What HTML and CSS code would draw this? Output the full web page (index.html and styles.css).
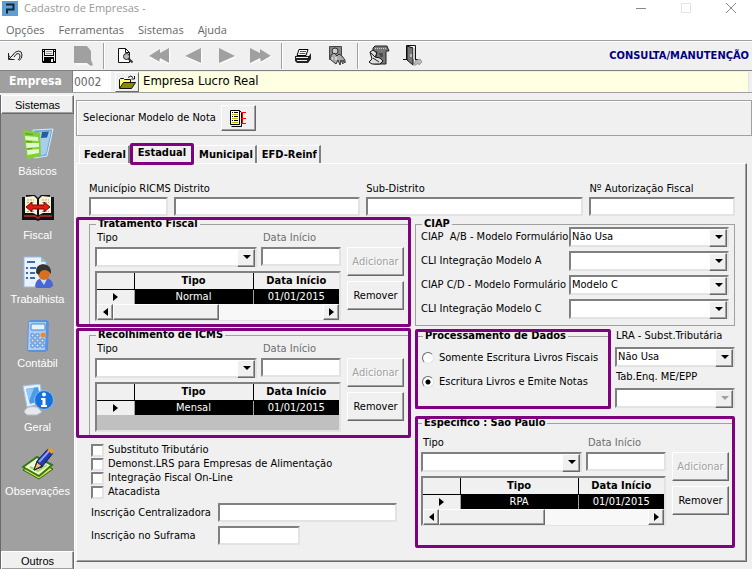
FILE: index.html
```html
<!DOCTYPE html>
<html lang="pt-BR">

<head>
    <meta charset="UTF-8">
    <meta name="viewport" content="width=device-width, initial-scale=1.0">
    <title>Cadastro de Empresas</title>
    <link rel="stylesheet" href="styles.css">
</head>

<body>
    <header class="titlebar">
        <svg class="logo" viewBox="0 0 16 15">
            <rect width="16" height="15" fill="#5f9fd0" />
            <path d="M4 3.500h7.500v5H4M5 8.500v4" fill="none" stroke="#12263c" stroke-width="2" />
        </svg>
        <h1>Cadastro de Empresas -</h1>
        <div class="window-buttons">
            <button type="button" aria-label="Minimizar"><svg viewBox="0 0 10 10"><path d="M0 5.500h10" stroke="#888" /></svg></button>
            <button type="button" aria-label="Maximizar"><svg viewBox="0 0 10 10"><path d="M.5.5h9v9h-9z" fill="none" stroke="#e4e4e4" /></svg></button>
            <button type="button" aria-label="Fechar"><svg viewBox="0 0 10 10"><path d="M0 0l10 10M10 0L0 10" stroke="#888" /></svg></button>
        </div>
    </header>
    <nav class="menubar">
        <a href="#">Opções</a>
        <a href="#">Ferramentas</a>
        <a href="#">Sistemas</a>
        <a href="#">Ajuda</a>
    </nav>

    <div class="toolbar">
        <div class="tools">
            <button type="button" aria-label="Desfazer">
                <svg width="16" height="12" viewBox="0 0 16 12"><path d="M1.500 3v6.500h6M2 9l5-5" fill="none" stroke="#222" /><path d="M4 8.500l-2-3M5 6q3-5 6.500-5T15 5t-3 5.500M7 7q2-3.500 4-3.500t2 2.500-2 4" fill="none" stroke="#222" /></svg>
            </button>
            <button type="button" aria-label="Salvar">
                <svg width="14" height="14" viewBox="0 0 14 14"><path d="M0 0h14v14H1l-1-1z" fill="#000" /><path d="M3 1h8v5H3zM1 1h1v1H1zM12 1h1v1h-1zM1 3h1v9H1zM12 3h1v9h-1zM2 7h10v1H2zM9 10h2v3H9z" fill="#f0f0f0" /><path d="M4 2.500h6M4 4.500h6" stroke="#999" /></svg>
            </button>
            <button type="button" aria-label="Excluir">
                <svg width="20" height="20" viewBox="0 0 20 20"><path d="M1 0h13l4 5v9l2 5-3 1-3-3H1z" fill="#a0a0a0" /><path d="M2 18h12l3 2" fill="none" stroke="#fff" /></svg>
            </button>
            <span class="separator"></span>
            <button type="button" aria-label="Pesquisar">
                <svg width="17" height="17" viewBox="0 0 17 17"><path d="M1.500 1.500h7l4 4v10h-11z" fill="#fff" stroke="#111" /><path d="M8.500 1.500v4h4" fill="none" stroke="#111" /><circle cx="9.500" cy="9.500" r="3" fill="#bbb" stroke="#222" /><path d="M11.500 11.500l4 4" stroke="#333" stroke-width="2" /></svg>
            </button>
            <button type="button" aria-label="Primeiro">
                <svg width="22" height="16" viewBox="0 0 22 16"><path d="M1 8L12 1v4l9-5v15l-9-5v4z" fill="#a0a0a0" /><path d="M2 9l10 6v-4l9.500 5V1" fill="none" stroke="#fff" /></svg>
            </button>
            <button type="button" aria-label="Anterior">
                <svg width="17" height="16" viewBox="0 0 17 16"><path d="M0 8L16 0v15z" fill="#a0a0a0" /><path d="M1 9l15.500 7V1" fill="none" stroke="#fff" /></svg>
            </button>
            <button type="button" aria-label="Próximo">
                <svg width="17" height="16" viewBox="0 0 17 16"><path d="M16 8L0 0v15z" fill="#a0a0a0" /><path d="M.5 16L17 8.500" stroke="#fff" /></svg>
            </button>
            <button type="button" aria-label="Último">
                <svg width="22" height="16" viewBox="0 0 22 16"><path d="M21 8L10 1v4L0 0v15l10-5v4z" fill="#a0a0a0" /><path d="M.5 16L10 11v4l11.500-7" fill="none" stroke="#fff" /></svg>
            </button>
            <span class="separator"></span>
            <button type="button" aria-label="Imprimir">
                <svg width="18" height="16" viewBox="0 0 18 16"><path d="M5 1.500h9l-2 6H3z" fill="#fff" stroke="#000" /><path d="M6 3.500h6M5.500 5.500h6" stroke="#555" /><path d="M1 8h14l2-3v6l-3 4H3l-2-2z" fill="#222" /><path d="M2 9.500h12M3 12.500h10" stroke="#eee" /></svg>
            </button>
            <button type="button" aria-label="Certificado">
                <svg width="18" height="19" viewBox="0 0 18 19"><path d="M1.500.5h12v13h-12z" fill="#888" stroke="#444" /><circle cx="7" cy="5" r="3" fill="#ccc" stroke="#333" /><path d="M3 14V9l3-2 3 3 2-2 3 2 3 4v3l-2-3v4l-2-4-1 5-2-5-2 4z" fill="#aaa" stroke="#333" /><path d="M4 11v3M8 11v3" stroke="#fff" /></svg>
            </button>
            <span class="separator"></span>
            <button type="button" aria-label="Telefones">
                <svg width="22" height="21" viewBox="0 0 22 21"><path d="M5 3l2-2h12l2 5h-3v13H6l3-12H5z" fill="#777" stroke="#222" /><path d="M7 3.500h12" stroke="#ccc" stroke-dasharray="1 1" /><path d="M2 7l3-2 4 3-2 4 5 1 3 3-3 3H4l-3-2 3-3z" fill="#ddd" stroke="#111" /><path d="M5 13l6 4M3 8l4 4M11 9h4M12 11h3" stroke="#222" /></svg>
            </button>
            <button type="button" aria-label="Sair">
                <svg width="20" height="21" viewBox="0 0 20 21"><path d="M3.500 14V.5h9V14M0 14.500h4M12 14.500h3" fill="none" stroke="#111" /><path d="M4 1l6 2v17l-6-5z" fill="#777" stroke="#111" /><path d="M10 3h2v11h-2z" fill="#ccc" /><path d="M8 9v3" stroke="#fff" /><path d="M10 20q3-2 2-4l5-2 2 3-3 3-1-2q-2 3-5 2z" fill="#bbb" stroke="#999" /></svg>
            </button>
        </div>
        <strong class="mode">CONSULTA/MANUTENÇÃO</strong>
    </div>

    <div class="company">
        <label for="empresa">Empresa</label>
        <input type="text" id="empresa" class="company-code" value="0002">
        <button type="button" class="open-button" aria-label="Abrir empresa">
            <svg width="17" height="14" viewBox="0 0 17 14"><path d="M.5 13V4.500l1-1h3l1 1h6v3" fill="#ff6" stroke="#111" /><path d="M.5 13.500l4-6h12l-4 6z" fill="#8a8a00" stroke="#111" /><path d="M9 2.500q3-3 5 0M15.500 1v3h-3" fill="none" stroke="#111" /></svg>
        </button>
        <input type="text" class="company-name" value="Empresa Lucro Real" aria-label="Nome da empresa">
    </div>

    <div class="workspace">
        <aside class="sidebar">
            <button type="button" class="group-button">Sistemas</button>
            <nav class="shortcuts">
                <a href="#">
                    <svg viewBox="0 0 32 32">
                        <path d="M11 2l20-1-6 27-13 2z" fill="#6da8d8" stroke="#dcebf8" />
                        <path d="M17 4l12-1-5 23-7 2z" fill="#a9cdec" />
                        <path d="M20 4l7-.5-2 6-6 .5z" fill="#245f9d" />
                        <path d="M1 2l17 3 1 23-14 3z" fill="#7ed035" />
                        <path d="M3 8l13 1 .3 4-12.800-1zM4 15l13 0v4l-12.500 1zM5 22l12-1v4l-11.500 2z" fill="#e2f7ca" />
                        <path d="M3 5.500l8 1M4 13.500l6 .5M5 21l5-.5" stroke="#4c9a22" />
                    </svg>
                    <span>Básicos</span>
                </a>
                <a href="#">
                    <svg viewBox="0 0 32 32">
                        <path d="M0 5h4V3h9l3 3 3-3h9v2h4v23H18l-2 1-2-1H0z" fill="#111" />
                        <path d="M3 5l9-1 3 3v16l-4-2H3zM29 5l-9-1-3 3v16l4-2h8z" fill="#f7f2da" />
                        <path d="M5 8h7M5 10.500h7M5 19.500h7M20 8h7M20 10.500h7M20 19.500h7" stroke="#b8a96b" stroke-dasharray="2 1" />
                        <path d="M2 24h11l3 2 3-2h11" stroke="#982626" stroke-width="2" fill="none" />
                        <path d="M4 15l6-5v3h12v-3l6 5-6 5v-3H10v3z" fill="#e01b12" stroke="#7c0500" />
                    </svg>
                    <span>Fiscal</span>
                </a>
                <a href="#">
                    <svg viewBox="0 0 32 32">
                        <path d="M2 1h17l5 5v25H2z" fill="#eaf3fd" stroke="#94bce5" />
                        <path d="M19 1v5h5z" fill="#94bce5" />
                        <path d="M5 6h8M4 12h2M8 12h6M4 17h2M8 17h5M4 22h2M8 22h5" stroke="#3f6ca8" stroke-width="2" />
                        <path d="M13 31q0-9 9-9t9 8l-3 2H15z" fill="#4967d4" />
                        <path d="M18 23l4 6 3-6z" fill="#cfdcfc" />
                        <ellipse cx="22" cy="17" rx="6" ry="7" fill="#d96f20" />
                        <path d="M14 17q-1-8 7-9 9 1 8 10-3-4-6-4-5 0-6 5z" fill="#333" />
                    </svg>
                    <span>Trabalhista</span>
                </a>
                <a href="#">
                    <svg viewBox="0 0 32 32">
                        <path d="M6 2l3-2h16l2 2-1 28-3 2H7l-2-2z" fill="#5a93dc" />
                        <path d="M7 2h17l-1 28H6z" fill="#a9cdf6" />
                        <rect x="9" y="4" width="14" height="6" rx="1" fill="#e5f2ff" stroke="#4a83cc" />
                        <path d="M9 14h3v3H9zM14 14h3v3h-3zM9 19h3v3H9zM14 19h3v3h-3zM19 19h3v3h-3zM9 24h3v3H9zM14 24h3v3h-3zM19 24h3v3h-3z" fill="#e9f3ff" stroke="#5285c4" />
                        <circle cx="21" cy="15" r="2.500" fill="#f38a1e" />
                    </svg>
                    <span>Contábil</span>
                </a>
                <a href="#">
                    <svg viewBox="0 0 32 32">
                        <path d="M1 2l17-2 3 19-16 4z" fill="#e6f1fb" stroke="#a3c4e4" />
                        <path d="M4 5l12-2 3 14-11 3z" fill="#4d9be8" />
                        <path d="M4 5l8-1-5 13z" fill="#91c8fa" />
                        <path d="M2 28q2-7 13-5l5 5-5 3H5z" fill="#e6e9ec" stroke="#b1bac4" />
                        <circle cx="22" cy="16" r="9.500" fill="#1671dc" stroke="#85bbf6" />
                        <circle cx="22" cy="10.500" r="2" fill="#fff" />
                        <path d="M19 14h4.500v7H25v2h-6v-2h1.500v-5H19z" fill="#fff" />
                    </svg>
                    <span>Geral</span>
                </a>
                <a href="#">
                    <svg viewBox="0 0 32 32">
                        <path d="M1 22l13-8 17 7-14 10z" fill="#d8e83f" stroke="#2b6013" />
                        <path d="M1 19l14-10 15 8-13 11z" fill="#effbd0" stroke="#367818" stroke-width="2" />
                        <path d="M8 19l8 4 9-6" stroke="#a4d86a" stroke-width="2" fill="none" />
                        <path d="M12 22l3-9L26 1l5 4-11 14z" fill="#2639a8" stroke="#10164c" />
                        <path d="M17 14L27 3" stroke="#8da0ff" stroke-width="2" />
                        <path d="M25 2l3-2 4 3-2 3z" fill="#e3a326" />
                        <path d="M12 22l3-8 5 4z" fill="#e7c580" stroke="#222" />
                    </svg>
                    <span>Observações</span>
                </a>
            </nav>
            <button type="button" class="group-button">Outros</button>
        </aside>

        <main class="content">
            <div class="model">
                <span>Selecionar Modelo de Nota</span>
                <button type="button" class="model-button" aria-label="Selecionar modelo">
                    <svg width="16" height="17" viewBox="0 0 16 17"><path d="M.5.500h9v14h-9z" fill="#fff" stroke="#000" /><path d="M9.500.500l2 2v14h-10" fill="none" stroke="#000" /><path d="M2 2.500h1M4 2.500h4M2 6.500h1M4 6.500h4M2 10.500h1M4 10.500h4" stroke="#000" /><path d="M2 4.500h6M2 8.500h6M2 12.500h6" stroke="#bb0" /><path d="M11 2.500h5M11 8.500h5M11 13.500h5M12.500 2v12" stroke="#f00" /></svg>
                </button>
            </div>

            <div class="tabs" role="tablist">
                <button type="button" role="tab" class="tab">Federal</button>
                <button type="button" role="tab" class="tab active marked" aria-selected="true">Estadual</button>
                <button type="button" role="tab" class="tab">Municipal</button>
                <button type="button" role="tab" class="tab">EFD-Reinf</button>
            </div>

            <form class="panel" action="#">
                <div class="location">
                    <div>
                        <label for="municipio">Município RICMS</label>
                        <input type="text" id="municipio" class="field">
                    </div>
                    <div>
                        <label for="distrito">Distrito</label>
                        <input type="text" id="distrito" class="field">
                    </div>
                    <div>
                        <label for="subDistrito">Sub-Distrito</label>
                        <input type="text" id="subDistrito" class="field">
                    </div>
                    <div>
                        <label for="autorizacao">Nº Autorização Fiscal</label>
                        <input type="text" id="autorizacao" class="field">
                    </div>
                </div>

                <div class="columns">
                    <div class="column-left">
                        <div class="group marked">
                            <fieldset>
                                <legend>Tratamento Fiscal</legend>
                                <div class="entry">
                                    <div class="entry-data">
                                        <div class="entry-fields">
                                            <label for="tipoFiscal">Tipo</label>
                                            <label for="dataFiscal" class="muted">Data Início</label>
                                            <div class="combo"><select id="tipoFiscal"><option></option></select></div>
                                            <input type="text" id="dataFiscal" class="field">
                                        </div>
                                        <div class="grid">
                                            <table>
                                                <thead>
                                                    <tr><th class="mark"></th><th>Tipo</th><th class="date">Data Início</th></tr>
                                                </thead>
                                                <tbody>
                                                    <tr><td class="mark"><i class="arrow-right"></i></td><td>Normal</td><td>01/01/2015</td></tr>
                                                </tbody>
                                            </table>
                                            <div class="scrollbar">
                                                <span class="scroll-end"><i class="arrow-left"></i></span>
                                                <span class="thumb"></span>
                                                <span class="scroll-end"><i class="arrow-right"></i></span>
                                            </div>
                                        </div>
                                    </div>
                                    <div class="entry-buttons">
                                        <button type="button" disabled>Adicionar</button>
                                        <button type="button">Remover</button>
                                    </div>
                                </div>
                            </fieldset>
                        </div>

                        <div class="group marked">
                            <fieldset>
                                <legend>Recolhimento de ICMS</legend>
                                <div class="entry">
                                    <div class="entry-data">
                                        <div class="entry-fields">
                                            <label for="tipoIcms">Tipo</label>
                                            <label for="dataIcms" class="muted">Data Início</label>
                                            <div class="combo"><select id="tipoIcms"><option></option></select></div>
                                            <input type="text" id="dataIcms" class="field">
                                        </div>
                                        <div class="grid">
                                            <table>
                                                <thead>
                                                    <tr><th class="mark"></th><th>Tipo</th><th class="date">Data Início</th></tr>
                                                </thead>
                                                <tbody>
                                                    <tr><td class="mark"><i class="arrow-right"></i></td><td>Mensal</td><td>01/01/2015</td></tr>
                                                </tbody>
                                            </table>
                                        </div>
                                    </div>
                                    <div class="entry-buttons">
                                        <button type="button" disabled>Adicionar</button>
                                        <button type="button">Remover</button>
                                    </div>
                                </div>
                            </fieldset>
                        </div>

                        <div class="checks">
                            <label><input type="checkbox" name="substituto">Substituto Tributário</label>
                            <label><input type="checkbox" name="demonst">Demonst.LRS para Empresas de Alimentação</label>
                            <label><input type="checkbox" name="integracao">Integração Fiscal On-Line</label>
                            <label><input type="checkbox" name="atacadista">Atacadista</label>
                        </div>
                        <div class="registrations">
                            <label for="centralizadora">Inscrição Centralizadora</label>
                            <input type="text" id="centralizadora" class="field">
                            <label for="suframa">Inscrição no Suframa</label>
                            <input type="text" id="suframa" class="field short">
                        </div>
                    </div>

                    <div class="column-right">
                        <fieldset class="ciap">
                            <legend>CIAP</legend>
                            <div class="ciap-fields">
                                <label for="ciapAB">CIAP&nbsp; A/B - Modelo Formulário</label>
                                <div class="combo"><select id="ciapAB"><option>Não Usa</option></select></div>
                                <label for="cliA">CLI Integração Modelo A</label>
                                <div class="combo"><select id="cliA"><option></option></select></div>
                                <label for="ciapCD">CIAP C/D - Modelo Formulário</label>
                                <div class="combo"><select id="ciapCD"><option>Modelo C</option></select></div>
                                <label for="cliC">CLI Integração Modelo C</label>
                                <div class="combo"><select id="cliC"><option></option></select></div>
                            </div>
                        </fieldset>

                        <div class="processing">
                            <div class="marked">
                                <fieldset>
                                    <legend>Processamento de Dados</legend>
                                    <label><input type="radio" name="processamento">Somente Escritura Livros Fiscais</label>
                                    <label><input type="radio" name="processamento" checked>Escritura Livros e Emite Notas</label>
                                </fieldset>
                            </div>
                            <div class="tables">
                                <label for="lra">LRA - Subst.Tributária</label>
                                <div class="combo"><select id="lra"><option>Não Usa</option></select></div>
                                <label for="tabEnq">Tab.Enq. ME/EPP</label>
                                <div class="combo"><select id="tabEnq" disabled><option></option></select></div>
                            </div>
                        </div>

                        <div class="state marked">
                            <fieldset>
                                <legend>Específico : São Paulo</legend>
                                <div class="entry">
                                    <div class="entry-data">
                                        <div class="entry-fields">
                                            <label for="tipoSp">Tipo</label>
                                            <label for="dataSp" class="muted">Data Início</label>
                                            <div class="combo"><select id="tipoSp"><option></option></select></div>
                                            <input type="text" id="dataSp" class="field">
                                        </div>
                                        <div class="grid">
                                            <table>
                                                <thead>
                                                    <tr><th class="mark"></th><th>Tipo</th><th class="date">Data Início</th></tr>
                                                </thead>
                                                <tbody>
                                                    <tr><td class="mark"><i class="arrow-right"></i></td><td>RPA</td><td>01/01/2015</td></tr>
                                                </tbody>
                                            </table>
                                            <div class="scrollbar">
                                                <span class="scroll-end"><i class="arrow-left"></i></span>
                                                <span class="thumb"></span>
                                                <span class="scroll-end"><i class="arrow-right"></i></span>
                                            </div>
                                        </div>
                                    </div>
                                    <div class="entry-buttons">
                                        <button type="button" disabled>Adicionar</button>
                                        <button type="button">Remover</button>
                                    </div>
                                </div>
                            </fieldset>
                        </div>
                    </div>
                </div>
            </form>
        </main>
    </div>
</body>

</html>
```

FILE: styles.css
```css
* {
    margin: 0;
    padding: 0;
    box-sizing: border-box;
}

body {
    display: flex;
    flex-direction: column;
    min-height: 100vh;
    background: #f0f0f0;
    color: #000;
    font: 11px/14px Tahoma, "DejaVu Sans Condensed", sans-serif;
}

button,
input,
select {
    font: inherit;
    color: inherit;
    border: 0;
    border-radius: 0;
    outline: 0;
}

button {
    background: #f0f0f0;
}

a {
    color: inherit;
    text-decoration: none;
}

label,
legend,
button {
    white-space: nowrap;
}

svg {
    display: block;
}

/* title and menu */
.titlebar {
    display: flex;
    align-items: center;
    height: 16px;
    padding-left: 2px;
    background: #fff;
    color: #999;
}

.titlebar h1 {
    flex: 1;
    margin-left: 6px;
    font: 11px/14px "Segoe UI", "Open Sans", sans-serif;
}

.logo {
    width: 16px;
    height: 15px;
}

.window-buttons {
    display: flex;
    padding-right: 16px;
    gap: 35px;
}

.window-buttons button {
    width: 10px;
    height: 10px;
    background: none;
}

.menubar {
    display: flex;
    gap: 14px;
    height: 24px;
    padding: 6px 6px 0;
    background: #fff;
    color: #666;
    font: 11px/16px "Segoe UI", "Open Sans", sans-serif;
}

/* toolbar */
.toolbar {
    display: flex;
    align-items: center;
    justify-content: space-between;
    height: 31px;
    padding-right: 3px;
    border-top: 1px solid #a0a0a0;
    border-bottom: 1px solid #808080;
    box-shadow: inset 0 1px #fff;
}

.tools {
    display: flex;
    align-items: center;
    margin-left: -2px;
}

.tools button {
    display: flex;
    align-items: center;
    justify-content: center;
    width: 34px;
    height: 26px;
    background: none;
}

.separator {
    width: 2px;
    height: 26px;
    margin: 0 3px;
    border-left: 1px solid #a0a0a0;
    border-right: 1px solid #fff;
}

.mode {
    color: #000080;
}

.company {
    display: flex;
    align-items: center;
    height: 22px;
    padding-right: 3px;
    border-bottom: 1px solid #a0a0a0;
    font-size: 12px;
}

.company label {
    width: 72px;
    padding-left: 9px;
    background: #a0a0a0;
    color: #fff;
    font-weight: bold;
    line-height: 21px;
}

.company-code {
    width: 39px;
    height: 21px;
    padding-left: 1px;
    border-left: 1px solid #808080;
    background: #fff;
    color: #666;
}

.open-button {
    display: flex;
    align-items: center;
    justify-content: center;
    width: 24px;
    height: 20px;
    margin-left: 4px;
    border: 1px solid;
    border-color: #fff #696969 #696969 #fff;
}

.company-name {
    flex: 1;
    min-width: 0;
    height: 20px;
    padding: 0 4px 2px;
    border-right: 1px solid #e3e3e3;
    background: #ffffe1;
    font-size: 13px;
}

/* sidebar */
.workspace {
    display: flex;
    flex: 1;
}

.sidebar {
    display: flex;
    flex-direction: column;
    width: 75px;
    margin-top: 2px;
    border-left: 1px solid #696969;
    border-right: 1px solid #fff;
    background: #a0a0a0;
    font-family: "MS Sans Serif", "Liberation Sans", sans-serif;
}

.group-button {
    height: 19px;
    border: 1px solid;
    border-color: #fff #696969 #696969 #fff;
    box-shadow: inset -1px -1px #a0a0a0;
}

.shortcuts {
    flex: 1;
    padding-top: 14px;
    color: #fff;
}

.shortcuts a {
    display: flex;
    flex-direction: column;
    align-items: center;
    gap: 4px;
    height: 64px;
}

.shortcuts svg {
    width: 32px;
    height: 32px;
}

/* content */
.content {
    flex: 1;
    min-width: 0;
    padding: 7px 0 8px 1px;
}

.model {
    display: flex;
    align-items: center;
    gap: 5px;
    height: 36px;
    padding-left: 6px;
    border: 1px solid #a0a0a0;
    box-shadow: inset 1px 1px #fff;
}

.model-button,
.entry-buttons button {
    border: 1px solid;
    border-color: #fff #696969 #696969 #fff;
    box-shadow: inset -1px -1px #a0a0a0;
}

.model-button {
    display: flex;
    align-items: center;
    justify-content: center;
    width: 35px;
    height: 26px;
}

.tabs {
    display: flex;
    align-items: flex-end;
    height: 27px;
    padding-left: 3px;
}

.tab {
    height: 18px;
    padding: 0 2px 0 4px;
    border-top: 1px solid #fff;
    border-left: 1px solid #fff;
    border-right: 2px solid #808080;
    font-weight: bold;
}

.tab.active {
    z-index: 1;
    height: 22px;
    margin-bottom: -2px;
    padding: 0 8px 2px;
    border: 0;
}

/* purple frame drawn over an area of the form */
.marked {
    position: relative;
}

.marked::after {
    content: "";
    position: absolute;
    inset: 0;
    border: 3px solid #800080;
    border-radius: 2px;
    pointer-events: none;
}

.panel {
    margin-right: 5px;
    min-height: 399px;
    padding: 18px 11px 0 0;
    border: 1px solid;
    border-color: #fff #696969 #696969 #fff;
    box-shadow: inset -1px -1px #a0a0a0;
}

.field,
.combo,
.grid {
    border: 2px solid;
    border-color: #808080 #e3e3e3 #e3e3e3 #808080;
    background: #fff;
}

.field {
    display: block;
    width: 100%;
    height: 19px;
    padding: 0 2px;
}

.location {
    display: grid;
    grid-template-columns: minmax(0, 79fr) minmax(0, 187fr) minmax(0, 218fr) minmax(0, 146fr);
    gap: 6px;
    padding-left: 12px;
}

.location label {
    display: block;
    margin-bottom: 1px;
}

.columns {
    display: grid;
    grid-template-columns: minmax(0, 1fr) 320px;
    gap: 4px;
    margin-top: 1px;
}

.column-left {
    margin-left: -1px;
}

fieldset {
    min-width: 0;
    padding: 0 5px 4px;
    border: 1px solid #a0a0a0;
}

legend {
    margin-left: 1px;
    padding: 0 2px;
    font-weight: bold;
}

.group {
    margin-bottom: 1px;
    padding: 0 1px 1px 13px;
}

.entry {
    display: flex;
    gap: 6px;
}

.entry-data {
    flex: 1;
    min-width: 0;
}

.entry-fields {
    display: grid;
    grid-template-columns: 1fr 80px;
    grid-template-rows: 16px 20px;
    column-gap: 4px;
    margin-bottom: 4px;
}

.entry-fields label {
    padding-left: 2px;
}

.muted {
    color: #6d6d6d;
}

.entry-buttons {
    display: flex;
    flex-direction: column;
    gap: 5px;
    width: 57px;
    padding-top: 16px;
}

.entry-buttons button {
    height: 29px;
}

.entry-buttons button:disabled {
    color: #a0a0a0;
    text-shadow: 1px 1px #fff;
}

/* drop-down with its raised arrow button */
.combo {
    position: relative;
    height: 20px;
}

.combo select {
    display: block;
    width: 100%;
    height: 16px;
    padding: 0 18px 0 1px;
    appearance: none;
    background: #fff;
    opacity: 1;
}

.combo::before {
    content: "";
    position: absolute;
    top: 0;
    right: 0;
    width: 16px;
    height: 16px;
    border: 1px solid;
    border-color: #fff #696969 #696969 #fff;
    background: #f0f0f0;
    box-shadow: inset -1px -1px #a0a0a0;
    pointer-events: none;
}

.combo::after {
    content: "";
    position: absolute;
    top: 6px;
    right: 4px;
    border: 4px solid transparent;
    border-top-color: #000;
    border-bottom: 0;
    pointer-events: none;
}

.combo:has(:disabled)::after {
    border-top-color: #a0a0a0;
}

.grid {
    height: 50px;
    background: #c0c0c0;
}

.grid table {
    width: 100%;
    table-layout: fixed;
    border-collapse: collapse;
}

.grid th {
    height: 16px;
    border-right: 1px solid #000;
    border-bottom: 1px solid #000;
    background: #f0f0f0;
}

.grid td {
    height: 14px;
    background: #000;
    border-right: 1px solid #a0a0a0;
    color: #fff;
    text-align: center;
    line-height: 14px;
}

.grid th:last-child,
.grid td:last-child {
    border-right: 0;
}

.grid .mark {
    width: 37px;
    background: #f0f0f0;
}

.grid .date {
    width: 86px;
}

.arrow-right,
.arrow-left {
    display: inline-block;
    border: 4px solid transparent;
    vertical-align: middle;
}

.arrow-right {
    border-left: 5px solid #000;
    border-right: 0;
}

.arrow-left {
    border-right: 5px solid #000;
    border-left: 0;
}

.grid td .arrow-right {
    display: block;
    margin: 0 auto;
    width: 5px;
}

.scrollbar {
    display: flex;
    height: 16px;
    background: #f8f8f8;
}

.scroll-end,
.thumb {
    border: 1px solid;
    border-color: #fff #696969 #696969 #fff;
    background: #f0f0f0;
    box-shadow: inset -1px -1px #a0a0a0;
}

.scroll-end {
    display: flex;
    align-items: center;
    justify-content: center;
    width: 16px;
}

.scroll-end:last-child {
    margin-left: auto;
}

.thumb {
    width: 106px;
}

/* checkboxes and registrations */
.checks {
    padding: 4px 0 0 15px;
}

.checks label {
    display: flex;
    align-items: center;
    gap: 4px;
}

.checks input {
    width: 13px;
    height: 13px;
    appearance: none;
    border: 2px solid;
    border-color: #808080 #e3e3e3 #e3e3e3 #808080;
    background: #fff;
}

.registrations {
    display: grid;
    grid-template-columns: 127px 1fr;
    align-items: center;
    row-gap: 4px;
    padding: 4px 14px 0 15px;
}

.short {
    width: 82px;
}

/* right column */
.ciap {
    height: 109px;
}

.ciap-fields {
    display: grid;
    grid-template-columns: minmax(0, 1fr) 160px;
    align-items: center;
    row-gap: 4px;
    margin-top: -4px;
}

.processing {
    display: grid;
    grid-template-columns: 1fr 120px;
    gap: 4px;
    margin-top: 3px;
}

.processing fieldset {
    height: 80px;
    padding: 3px 6px;
}

.processing fieldset label {
    display: flex;
    align-items: center;
    gap: 5px;
    height: 24px;
}

.processing input {
    width: 12px;
    height: 12px;
    appearance: none;
    border: 1px solid;
    border-color: #696969 #e3e3e3 #e3e3e3 #696969;
    border-radius: 50%;
    background: #fff;
}

.processing input:checked {
    background: radial-gradient(circle, #000 2px, #fff 3px);
}

.tables label {
    display: block;
    height: 18px;
    padding-left: 1px;
}

.tables .combo + label {
    margin-top: 3px;
}

.state {
    height: 132px;
    margin-top: 7px;
}

.state fieldset {
    height: 130px;
    padding-top: 6px;
}
```
